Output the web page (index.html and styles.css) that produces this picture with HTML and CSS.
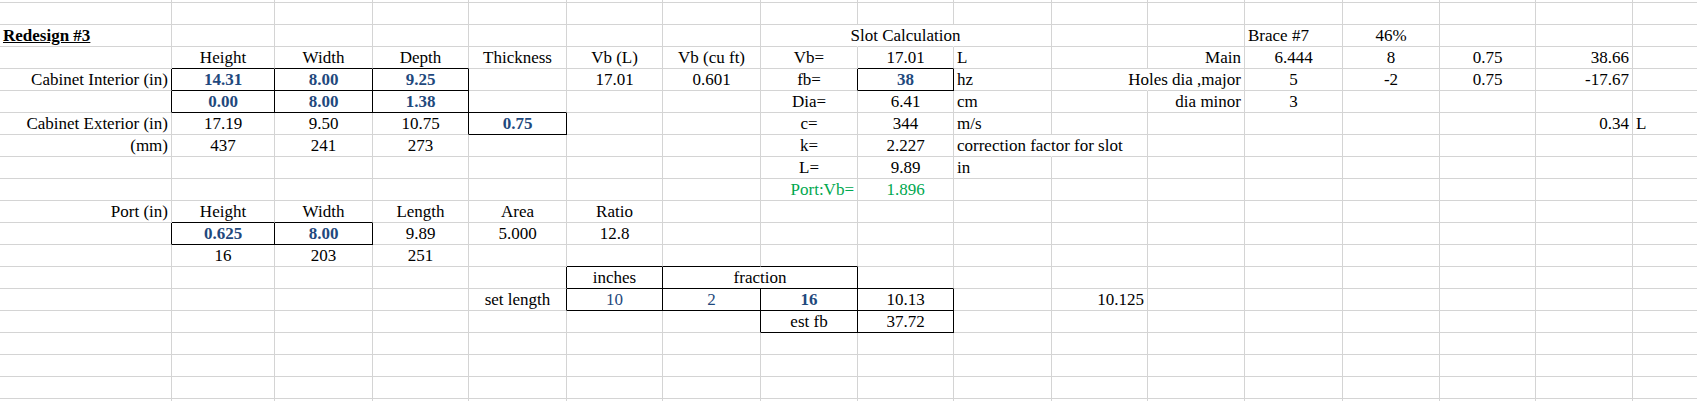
FILE: index.html
```html
<!DOCTYPE html>
<html lang="en">
<head>
    <meta charset="UTF-8">
    <title>Redesign #3 - Slot Calculation</title>
    <link rel="stylesheet" href="styles.css">
</head>
<body>
    <table class="sheet">
        <colgroup>
            <col class="col-a"><col class="col-b"><col class="col-c"><col class="col-d">
            <col class="col-e"><col class="col-f"><col class="col-g"><col class="col-h">
            <col class="col-i"><col class="col-j"><col class="col-k"><col class="col-l">
            <col class="col-m"><col class="col-n"><col class="col-o"><col class="col-p">
            <col class="col-q">
        </colgroup>
        <tbody>
            <tr class="edge">
                <td></td><td></td><td></td><td></td><td></td><td></td><td></td><td></td><td></td><td></td><td></td><td></td><td></td><td></td><td></td><td></td><td></td>
            </tr>
            <tr>
                <td></td><td></td><td></td><td></td><td></td><td></td><td></td><td></td><td></td><td></td><td></td><td></td><td></td><td></td><td></td><td></td><td></td>
            </tr>
            <tr>
                <td class="l title">Redesign #3</td>
                <td></td><td></td><td></td><td></td><td></td><td></td>
                <td class="nr"></td>
                <td class="nr"><div class="spill">Slot Calculation</div></td>
                <td></td><td></td><td></td>
                <td class="l">Brace #7</td>
                <td>46%</td>
                <td></td><td></td><td></td>
            </tr>
            <tr>
                <td></td>
                <td class="bb">Height</td>
                <td class="bb">Width</td>
                <td class="bb">Depth</td>
                <td>Thickness</td>
                <td>Vb (L)</td>
                <td>Vb (cu ft)</td>
                <td>Vb=</td>
                <td class="bb">17.01</td>
                <td class="l">L</td>
                <td></td>
                <td class="r">Main</td>
                <td>6.444</td>
                <td>8</td>
                <td>0.75</td>
                <td class="r">38.66</td>
                <td></td>
            </tr>
            <tr>
                <td class="r br">Cabinet Interior (in)</td>
                <td class="input br bb">14.31</td>
                <td class="input br bb">8.00</td>
                <td class="input br bb">9.25</td>
                <td></td>
                <td>17.01</td>
                <td>0.601</td>
                <td class="br">fb=</td>
                <td class="input br bb">38</td>
                <td class="l">hz</td>
                <td class="nr"></td>
                <td><div class="spill end">Holes dia ,major</div></td>
                <td>5</td>
                <td>-2</td>
                <td>0.75</td>
                <td class="r">-17.67</td>
                <td></td>
            </tr>
            <tr>
                <td class="br"></td>
                <td class="input br bb">0.00</td>
                <td class="input br bb">8.00</td>
                <td class="input br bb">1.38</td>
                <td class="bb"></td>
                <td></td><td></td>
                <td>Dia=</td>
                <td>6.41</td>
                <td class="l">cm</td>
                <td></td>
                <td class="r">dia minor</td>
                <td>3</td>
                <td></td><td></td><td></td><td></td>
            </tr>
            <tr>
                <td class="r">Cabinet Exterior (in)</td>
                <td>17.19</td>
                <td>9.50</td>
                <td class="br">10.75</td>
                <td class="input br bb">0.75</td>
                <td></td><td></td>
                <td>c=</td>
                <td>344</td>
                <td class="l">m/s</td>
                <td></td><td></td><td></td><td></td><td></td>
                <td class="r">0.34</td>
                <td class="l">L</td>
            </tr>
            <tr>
                <td class="r">(mm)</td>
                <td>437</td>
                <td>241</td>
                <td>273</td>
                <td></td><td></td><td></td>
                <td>k=</td>
                <td>2.227</td>
                <td class="l nr">correction factor for slot</td>
                <td></td><td></td><td></td><td></td><td></td><td></td><td></td>
            </tr>
            <tr>
                <td></td><td></td><td></td><td></td><td></td><td></td><td></td>
                <td>L=</td>
                <td>9.89</td>
                <td class="l">in</td>
                <td></td><td></td><td></td><td></td><td></td><td></td><td></td>
            </tr>
            <tr>
                <td></td><td></td><td></td><td></td><td></td><td></td><td></td>
                <td class="r green">Port:Vb=</td>
                <td class="green">1.896</td>
                <td></td><td></td><td></td><td></td><td></td><td></td><td></td><td></td>
            </tr>
            <tr>
                <td class="r">Port (in)</td>
                <td class="bb">Height</td>
                <td class="bb">Width</td>
                <td>Length</td>
                <td>Area</td>
                <td>Ratio</td>
                <td></td><td></td><td></td><td></td><td></td><td></td><td></td><td></td><td></td><td></td><td></td>
            </tr>
            <tr>
                <td class="br"></td>
                <td class="input br bb">0.625</td>
                <td class="input br bb">8.00</td>
                <td>9.89</td>
                <td>5.000</td>
                <td>12.8</td>
                <td></td><td></td><td></td><td></td><td></td><td></td><td></td><td></td><td></td><td></td><td></td>
            </tr>
            <tr>
                <td></td>
                <td>16</td>
                <td>203</td>
                <td>251</td>
                <td></td>
                <td class="bb"></td>
                <td class="bb"></td>
                <td class="bb"></td>
                <td></td><td></td><td></td><td></td><td></td><td></td><td></td><td></td><td></td>
            </tr>
            <tr>
                <td></td><td></td><td></td><td></td>
                <td class="br"></td>
                <td class="br bb">inches</td>
                <td class="br bb" colspan="2">fraction</td>
                <td class="bb"></td>
                <td></td><td></td><td></td><td></td><td></td><td></td><td></td><td></td>
            </tr>
            <tr>
                <td></td><td></td><td></td><td></td>
                <td class="br">set length</td>
                <td class="blue br bb">10</td>
                <td class="blue br bb">2</td>
                <td class="input br bb">16</td>
                <td class="br bb">10.13</td>
                <td></td>
                <td class="r">10.125</td>
                <td></td><td></td><td></td><td></td><td></td><td></td>
            </tr>
            <tr>
                <td></td><td></td><td></td><td></td><td></td><td></td>
                <td class="br"></td>
                <td class="br bb">est fb</td>
                <td class="br bb">37.72</td>
                <td></td><td></td><td></td><td></td><td></td><td></td><td></td><td></td>
            </tr>
            <tr>
                <td></td><td></td><td></td><td></td><td></td><td></td><td></td><td></td><td></td><td></td><td></td><td></td><td></td><td></td><td></td><td></td><td></td>
            </tr>
            <tr>
                <td></td><td></td><td></td><td></td><td></td><td></td><td></td><td></td><td></td><td></td><td></td><td></td><td></td><td></td><td></td><td></td><td></td>
            </tr>
            <tr>
                <td></td><td></td><td></td><td></td><td></td><td></td><td></td><td></td><td></td><td></td><td></td><td></td><td></td><td></td><td></td><td></td><td></td>
            </tr>
            <tr>
                <td></td><td></td><td></td><td></td><td></td><td></td><td></td><td></td><td></td><td></td><td></td><td></td><td></td><td></td><td></td><td></td><td></td>
            </tr>
        </tbody>
    </table>
</body>
</html>
```

FILE: styles.css
```css
* {
    margin: 0;
    padding: 0;
    box-sizing: border-box;
}

body {
    font-family: "Liberation Serif", "Times New Roman", serif;
    font-size: 17px;
    background-color: white;
    color: black;
    overflow: hidden;
}

.sheet {
    border-collapse: separate;
    border-spacing: 0;
    table-layout: fixed;
    width: 1753px;
}

/* column widths follow the spreadsheet grid */
.col-a { width: 172px; }
.col-b { width: 103px; }
.col-c { width: 98px; }
.col-d { width: 96px; }
.col-e { width: 98px; }
.col-f { width: 96px; }
.col-g { width: 98px; }
.col-h { width: 97px; }
.col-i { width: 96px; }
.col-j { width: 98px; }
.col-k { width: 96px; }
.col-l { width: 97px; }
.col-m { width: 98px; }
.col-n { width: 97px; }
.col-o { width: 96px; }
.col-p { width: 97px; }
.col-q { width: 120px; }

.sheet tr {
    height: 22px;
}

.sheet tr.edge {
    height: 3px;
}

.sheet td {
    padding: 0 3px;
    border-right: 1px solid #d4d4d4;
    border-bottom: 1px solid #d4d4d4;
    line-height: 21px;
    text-align: center;
    vertical-align: bottom;
    white-space: nowrap;
    overflow: visible;
}

.sheet td.l {
    text-align: left;
}

.sheet td.r {
    text-align: right;
}

/* black box borders */
.sheet td.br {
    border-right-color: black;
}

.sheet td.bb {
    border-bottom-color: black;
}

/* gridline hidden under overflowing text */
.sheet td.nr {
    border-right-color: white;
}

.spill {
    display: flex;
    justify-content: center;
}

.spill.end {
    justify-content: flex-end;
}

.title {
    font-weight: bold;
    text-decoration: underline;
}

.input {
    font-weight: bold;
    color: #1f497d;
}

.blue {
    color: #1f497d;
}

.green {
    color: #00a84f;
}
```
